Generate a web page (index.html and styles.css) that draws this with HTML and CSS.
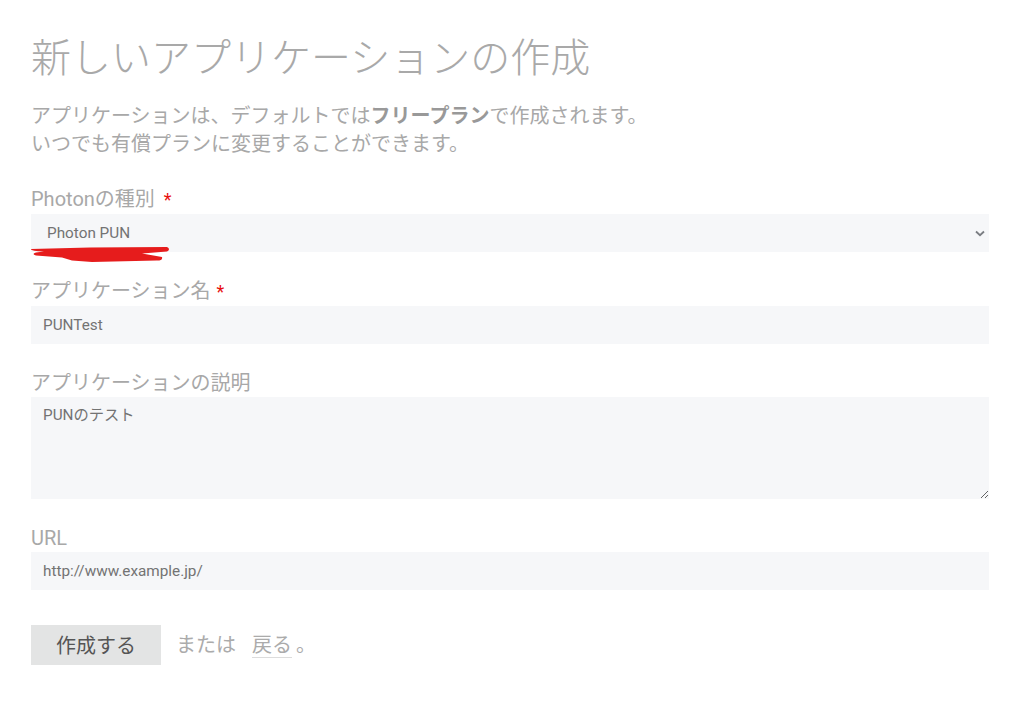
FILE: index.html
```html
<!DOCTYPE html>
<html lang="ja">
<head>
<meta charset="utf-8">
<title>新しいアプリケーションの作成</title>
<link rel="stylesheet" href="styles.css">
</head>
<body>
<main class="page">
  <h1 class="title">新しいアプリケーションの作成</h1>
  <p class="lead">アプリケーションは、デフォルトでは<strong>フリープラン</strong>で作成されます。<br>いつでも有償プランに変更することができます。</p>
  <form class="form">
    <div class="group marked">
      <label class="label">Photonの種別 <span class="req req-space">*</span></label>
      <div class="select-wrap">
        <select class="field select">
          <option>Photon PUN</option>
        </select>
        <svg class="chevron" width="10" height="7" viewBox="0 0 10 7"><path d="M1 1.5 L5 5.2 L9 1.5" fill="none" stroke="#7a7d82" stroke-width="1.8"/></svg>
      </div>
      <svg class="scribble" width="142" height="18" viewBox="0 0 142 18"><path d="M1 3 L60 1.5 L137 1 Q141 3 137 5.5 L112 7.5 L132 11 Q133 14.5 127 14.5 L62 16 L42 14.5 L32 11.5 L6 9.5 Q1 8 6 6.5 L14 5.5 Q0 5 1 3 Z" fill="#e61c1c"/></svg>
    </div>
    <div class="group">
      <label class="label">アプリケーション名<span class="req req-tight">*</span></label>
      <input class="field" type="text" value="PUNTest">
    </div>
    <div class="group">
      <label class="label">アプリケーションの説明</label>
      <textarea class="field area">PUNのテスト</textarea>
    </div>
    <div class="group">
      <label class="label">URL</label>
      <input class="field" type="text" value="http://www.example.jp/">
    </div>
    <div class="actions">
      <button type="button" class="btn">作成する</button>
      <span class="or">または</span>
      <a class="back">戻る</a>
      <span class="dot">。</span>
    </div>
  </form>
</main>
</body>
</html>
```
FILE: styles.css
```css
html, body {
  margin: 0;
  padding: 0;
  background: #ffffff;
}
body {
  font-family: Roboto, "Noto Sans CJK JP", sans-serif;
  color: #a8a8a8;
}
.page {
  padding: 31px 29px 0 31px;
}
.title {
  margin: 0;
  font-size: 40px;
  line-height: 56px;
  font-weight: 300;
  color: #a9a9a9;
  letter-spacing: 0;
}
.lead {
  margin: 15px 0 0;
  font-size: 20px;
  line-height: 28px;
  font-weight: 400;
  color: #a8a8a8;
}
.lead strong {
  font-weight: 700;
  color: #999999;
}
.form {
  margin-top: 27px;
  display: flex;
  flex-direction: column;
  gap: 25px;
}
.group {
  display: flex;
  flex-direction: column;
}
.marked {
  position: relative;
}
.label {
  font-size: 20px;
  line-height: 28px;
  color: #a8a8a8;
}
.req {
  color: #e81010;
  font-size: 18px;
}
.req-space {
  margin-left: 4px;
}
.req-tight {
  margin-left: 6px;
}
.field {
  box-sizing: border-box;
  width: 100%;
  height: 38px;
  border: none;
  background: #f6f7f9;
  font-family: Roboto, "Noto Sans CJK JP", sans-serif;
  font-size: 15.3px;
  color: #737373;
  padding: 0 12px;
  outline: none;
  margin: 0;
  border-radius: 0;
}
.select-wrap {
  position: relative;
}
.select {
  appearance: none;
  -webkit-appearance: none;
  padding-left: 16px;
}
.chevron {
  position: absolute;
  right: 4px;
  top: 16px;
}
.scribble {
  position: absolute;
  left: -1px;
  top: 61px;
}
.area {
  height: 102px;
  padding: 8px 12px;
  line-height: 20px;
  resize: vertical;
  display: block;
}
.actions {
  margin-top: 10px;
  display: flex;
  align-items: center;
  font-size: 20px;
  line-height: 28px;
}
.btn {
  width: 130px;
  height: 40px;
  border: none;
  background: #e3e4e4;
  color: #555555;
  font-family: Roboto, "Noto Sans CJK JP", sans-serif;
  font-size: 20px;
  padding: 0 0 2px;
  cursor: pointer;
}
.or {
  margin-left: 15px;
  color: #ababab;
}
.back {
  margin-left: 16px;
  color: #ababab;
  line-height: 24px;
  border-bottom: 1px solid #dcdcdc;
}
.dot {
  margin-left: 4px;
  color: #ababab;
}
```
